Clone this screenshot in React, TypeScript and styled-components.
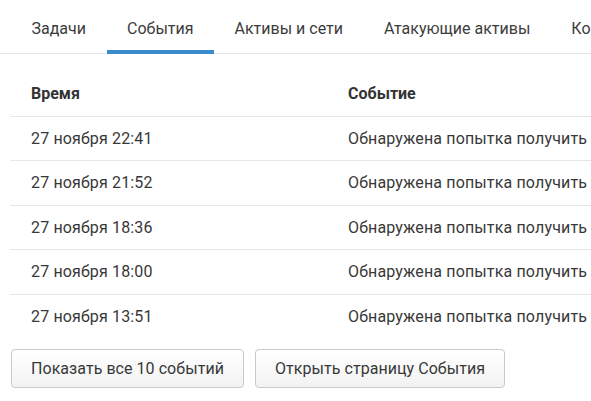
import React from "react";
import styled, { createGlobalStyle } from "styled-components";

const events = [
  { time: "27 ноября 22:41", text: "Обнаружена попытка получить учетные данные пользователя" },
  { time: "27 ноября 21:52", text: "Обнаружена попытка получить учетные данные пользователя" },
  { time: "27 ноября 18:36", text: "Обнаружена попытка получить учетные данные пользователя" },
  { time: "27 ноября 18:00", text: "Обнаружена попытка получить учетные данные пользователя" },
  { time: "27 ноября 13:51", text: "Обнаружена попытка получить учетные данные пользователя" },
];

const tabs = ["Задачи", "События", "Активы и сети", "Атакующие активы", "Компьютеры"];

const App: React.FC = () => {
  return (
    <Page>
      <GlobalStyle />
      <TabBar>
        {tabs.map((t) => (
          <Tab key={t} $active={t === "События"}>
            {t}
          </Tab>
        ))}
      </TabBar>
      <Table>
        <HeadRow>
          <TimeCell>Время</TimeCell>
          <EventCell>Событие</EventCell>
        </HeadRow>
        {events.map((e, i) => (
          <Row key={i} $last={i === events.length - 1}>
            <TimeCell>{e.time}</TimeCell>
            <EventCell>{e.text}</EventCell>
          </Row>
        ))}
      </Table>
      <Actions>
        <Button>Показать все 10 событий</Button>
        <Button>Открыть страницу События</Button>
      </Actions>
    </Page>
  );
};

const GlobalStyle = createGlobalStyle`
  html, body {
    margin: 0;
    padding: 0;
    background: #ffffff;
    overflow: hidden;
  }
  body {
    font-family: Roboto, "Liberation Sans", sans-serif;
    color: #383838;
  }
`;

const Page = styled.div`
  width: 591px;
  height: 401px;
  overflow: hidden;
`;

const TabBar = styled.div`
  display: flex;
  padding-left: 11px;
  border-bottom: 1px solid #e4e4e4;
  white-space: nowrap;
`;

const Tab = styled.div<{ $active?: boolean }>`
  box-sizing: border-box;
  height: 54px;
  margin-bottom: -1px;
  padding: 17px 20.5px 0;
  line-height: 24px;
  font-size: 16px;
  color: #3c3c3c;
  border-bottom: 4px solid ${(p) => (p.$active ? "#3b8dca" : "transparent")};
  flex-shrink: 0;
`;

const Table = styled.div`
  margin: 18px 0 0 10px;
  display: flex;
  flex-direction: column;
`;

const Row = styled.div<{ $last?: boolean }>`
  box-sizing: border-box;
  height: 44.5px;
  display: flex;
  align-items: center;
  font-size: 16px;
  letter-spacing: 0.15px;
  white-space: nowrap;
  border-bottom: 1px solid ${(p) => (p.$last ? "transparent" : "#e6e6e6")};
`;

const HeadRow = styled(Row)`
  font-weight: bold;
  letter-spacing: 0;
  color: #333333;
`;

const TimeCell = styled.div`
  width: 317px;
  flex-shrink: 0;
  padding-left: 21px;
  box-sizing: border-box;
`;

const EventCell = styled.div`
  padding-left: 21px;
  flex-shrink: 0;
`;

const Actions = styled.div`
  display: flex;
  gap: 11px;
  margin: 10px 0 0 11px;
`;

const Button = styled.button`
  height: 39px;
  padding: 0 19px;
  font-family: Roboto, "Liberation Sans", sans-serif;
  font-size: 16px;
  letter-spacing: 0.05px;
  color: #383838;
  background: linear-gradient(#ffffff, #f2f2f2);
  border: 1px solid #c9c9c9;
  border-radius: 4px;
  cursor: pointer;
`;

export default App;
